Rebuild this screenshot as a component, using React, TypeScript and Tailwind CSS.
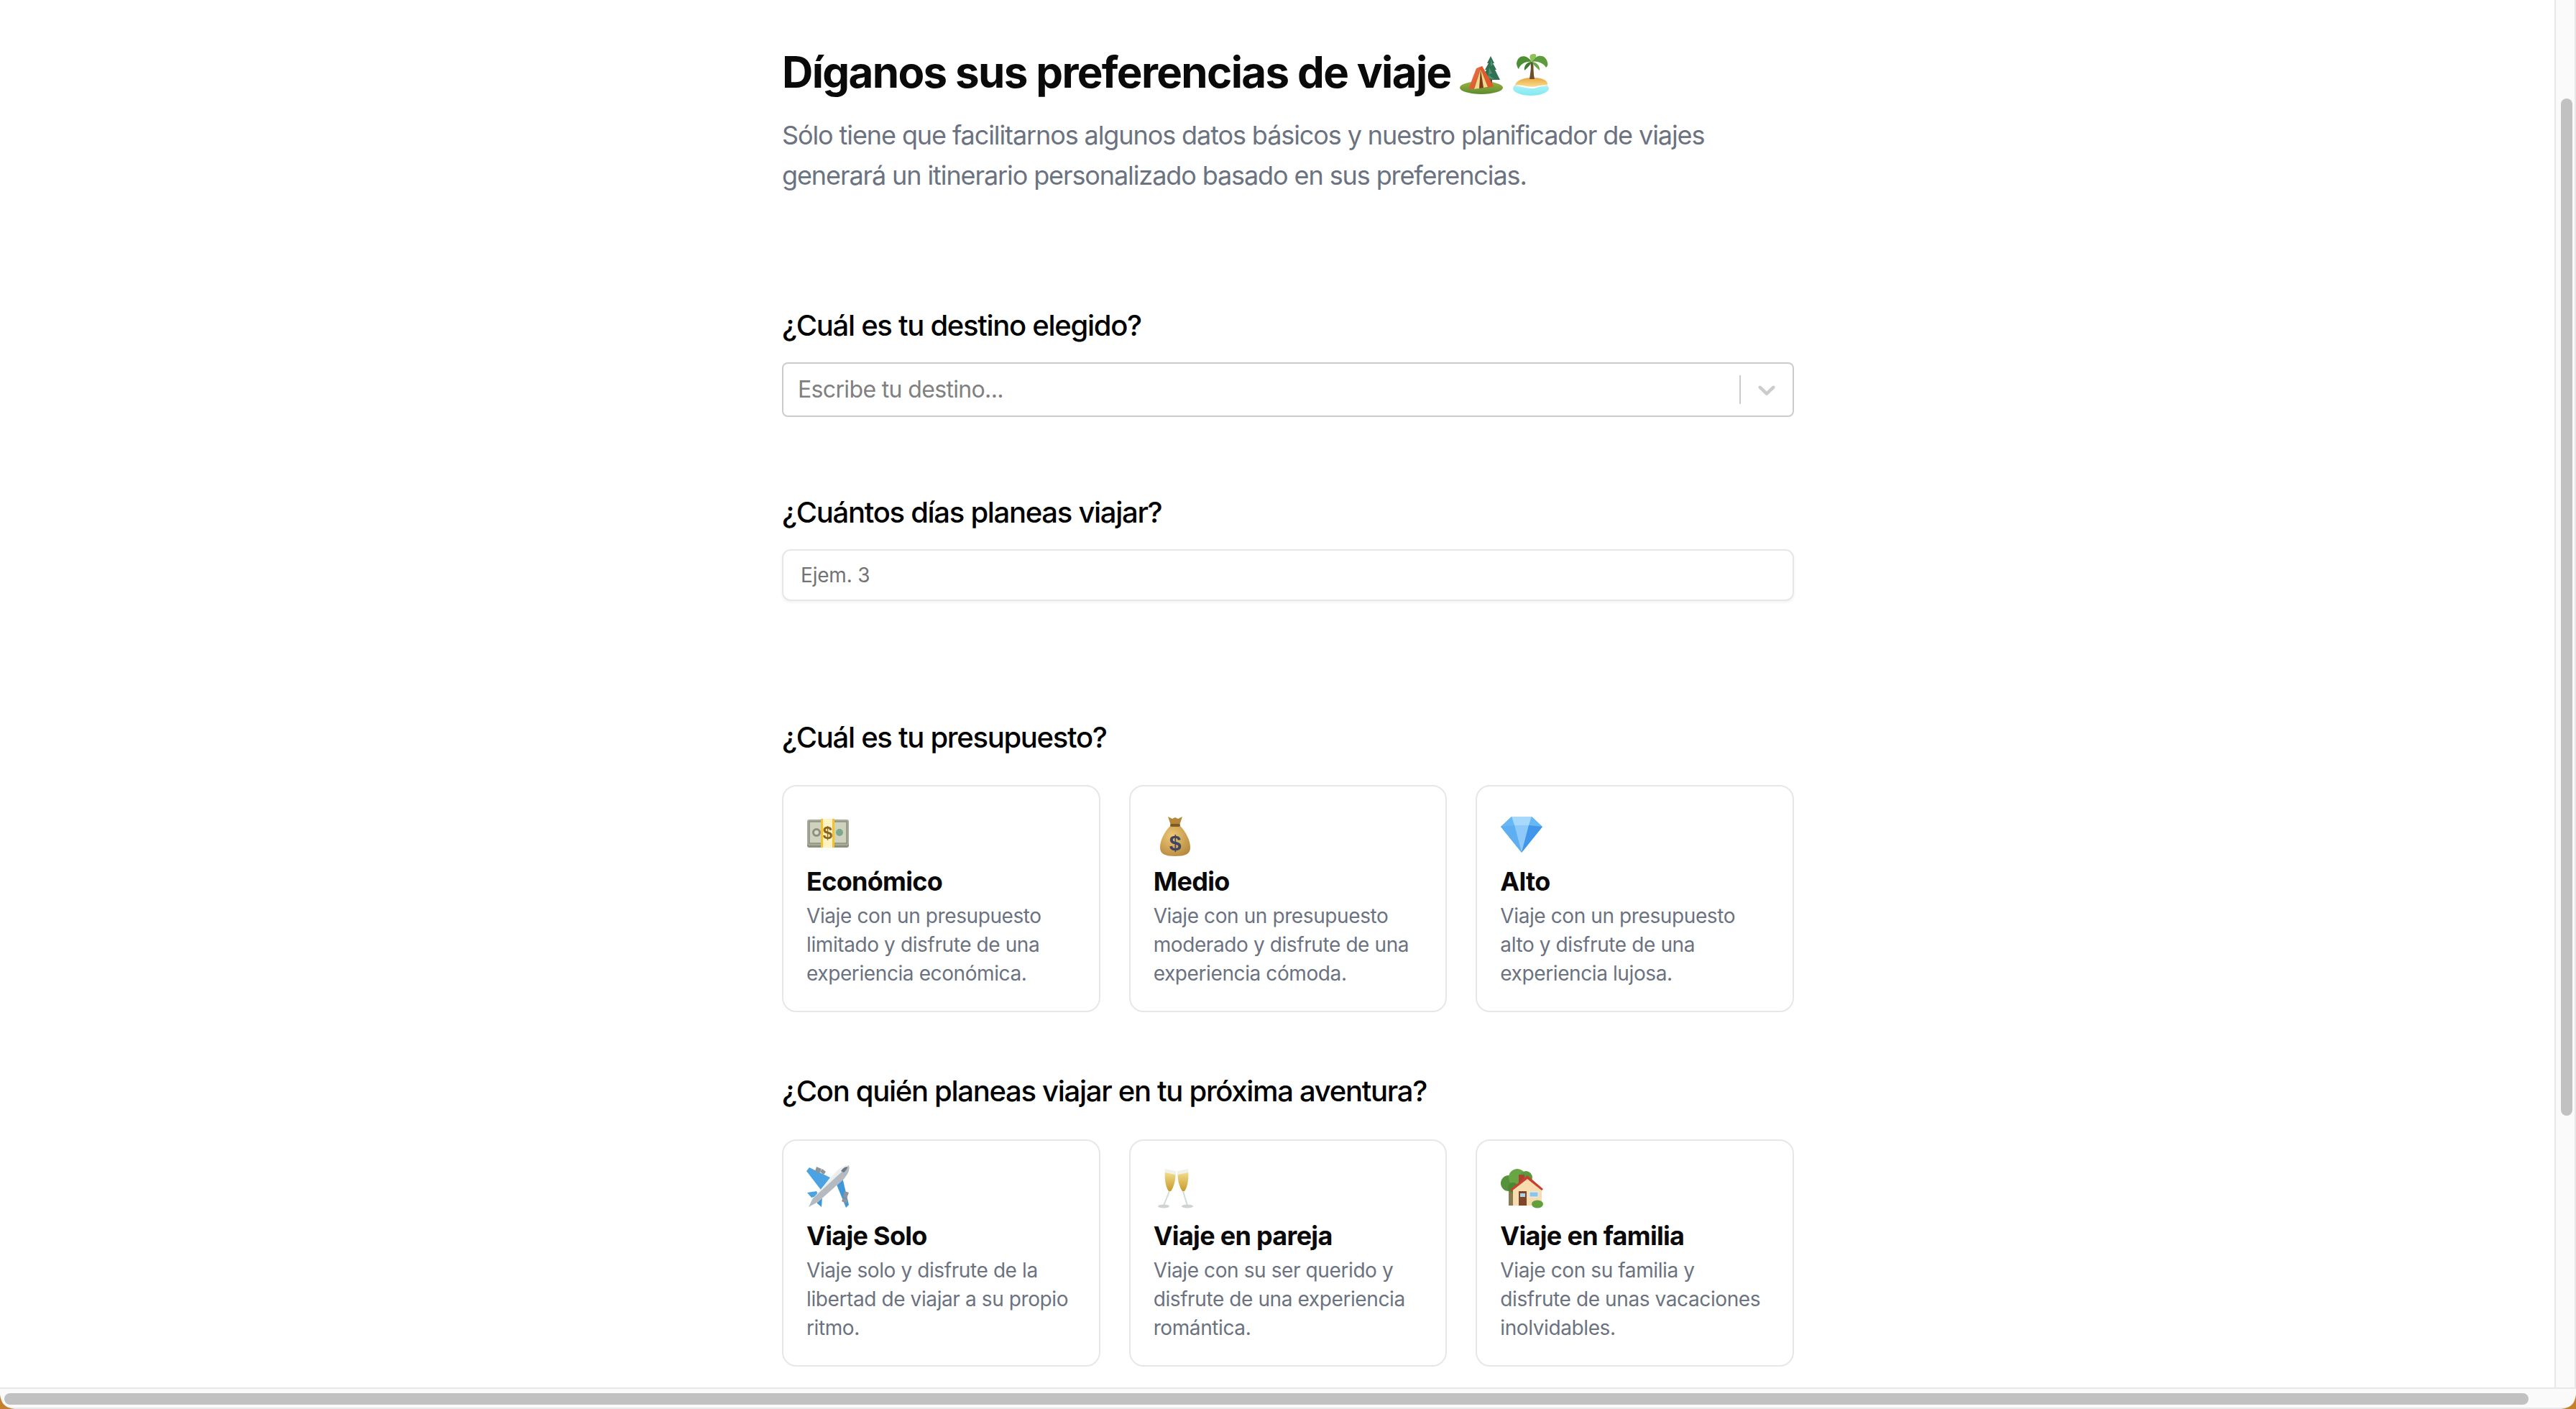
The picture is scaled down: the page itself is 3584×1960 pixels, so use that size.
import React from "react";

const Tent = () => (
  <svg viewBox="0 0 60 56" className="inline-block w-[60px] h-[56px] align-[-12px]">
    <defs>
      <linearGradient id="tg" x1="0" y1="0" x2="0" y2="1"><stop offset="0" stopColor="#9ab544" /><stop offset="1" stopColor="#5d8a2b" /></linearGradient>
      <linearGradient id="tr" x1="0" y1="0" x2="1" y2="1"><stop offset="0" stopColor="#f0764a" /><stop offset="1" stopColor="#cf4a22" /></linearGradient>
    </defs>
    <ellipse cx="30" cy="44" rx="30" ry="9" fill="url(#tg)" />
    <rect x="42" y="30" width="3" height="10" fill="#6b4a2c" />
    <path d="M43 0 L48 10 L46 10 L51 19 L49 19 L56 33 L30 33 L37 19 L35 19 L40 10 L38 10 Z" fill="#2f7150" />
    <path d="M43 4 L46 12 L43 14 Z M41 16 L45 24 L40 26 Z M40 26 L48 32 L38 31 Z" fill="#4d9470" />
    <path d="M12 46 L23 17 L31 14 L47 42 Z" fill="url(#tr)" />
    <path d="M31 14 L47 42 L38 44 L27 17 Z" fill="#e2592c" />
    <path d="M29 18 L20 46 L39 43 Z" fill="#7a3a20" />
    <path d="M29 18 L20 46 L27 45 Z M29 18 L39 43 L33 44 Z" fill="#f1d98a" />
  </svg>
);

const Island = () => (
  <svg viewBox="0 0 52 60" className="inline-block w-[52px] h-[60px] align-[-12px]">
    <defs>
      <linearGradient id="is" x1="0" y1="0" x2="0" y2="1"><stop offset="0" stopColor="#e8a83f" /><stop offset="1" stopColor="#fbdf95" /></linearGradient>
      <linearGradient id="iw" x1="0" y1="0" x2="0" y2="1"><stop offset="0" stopColor="#bff3f6" /><stop offset="1" stopColor="#7feaf2" /></linearGradient>
    </defs>
    <ellipse cx="26" cy="49" rx="25" ry="10" fill="url(#iw)" />
    <path d="M4 45 C5 37 18 34 28 34 C40 34 50 37 49 44 C46 46 40 44 34 47 C26 50 12 44 4 45 Z" fill="url(#is)" />
    <path d="M4 45 C14 43 24 49 34 46 C40 44 45 45 49 44 C46 47 40 45 34 48 C26 51 12 46 4 45 Z" fill="#ffffff" />
    <path d="M25 12 C27 20 25 28 24 36 L31 36 C29 28 30 20 29 12 Z" fill="#6e4c2c" />
    <path d="M27 12 C20 1 8 2 6 14 C6 18 8 21 9 22 C11 15 19 11 27 12 Z" fill="#4f8f34" />
    <path d="M27 12 C34 0 47 2 49 13 C50 16 49 18 47 20 C44 14 35 10 27 12 Z" fill="#5c9c3c" />
    <path d="M27 12 C22 4 25 1 30 1 C36 1 33 7 27 12 Z" fill="#8fc05a" />
    <path d="M27 12 C20 12 16 18 17 24 C21 20 25 17 27 12 Z" fill="#3d7a2e" />
    <path d="M27 12 C33 12 39 17 38 24 C34 20 30 17 27 12 Z" fill="#6aa844" />
  </svg>
);

const Money = () => (
  <svg viewBox="0 0 60 60" className="w-[60px] h-[60px]">
    <rect x="1" y="8" width="58" height="37" rx="3" fill="#8b8f7e" />
    <rect x="1" y="6" width="58" height="36" rx="3" fill="#a9ad98" />
    <rect x="4" y="9" width="52" height="30" fill="#cfd2bf" />
    <rect x="4" y="9" width="52" height="30" fill="none" stroke="#8d907f" strokeWidth="1.5" />
    <circle cx="14" cy="24" r="6" fill="#8d907f" />
    <circle cx="14" cy="24" r="3" fill="#d8dbc8" />
    <circle cx="46" cy="24" r="5" fill="#7da88c" />
    <rect x="20" y="5" width="19" height="40" fill="#fff3c4" />
    <rect x="20" y="5" width="3" height="40" fill="#f4c22f" />
    <rect x="36" y="5" width="3" height="40" fill="#f4c22f" />
    <text x="29.5" y="33" textAnchor="middle" fontSize="24" fontWeight="700" fill="#8a6414" fontFamily="Liberation Sans, sans-serif">$</text>
  </svg>
);

const Bag = () => (
  <svg viewBox="0 0 60 60" className="w-[60px] h-[60px]">
    <defs>
      <radialGradient id="bg" cx="0.4" cy="0.35" r="0.8"><stop offset="0" stopColor="#efc878" /><stop offset="1" stopColor="#b28336" /></radialGradient>
    </defs>
    <path d="M20 2 L26 5 L30 3 L34 5 L40 2 L36 14 L24 14 Z" fill="#b5873a" />
    <path d="M24 14 C14 24 9 36 9 45 C9 54 16 57 30 57 C44 57 51 54 51 45 C51 36 46 24 36 14 Z" fill="url(#bg)" />
    <rect x="23" y="12" width="14" height="4" rx="2" fill="#7f5a22" />
    <text x="30" y="49" textAnchor="middle" fontSize="30" fontWeight="700" fill="#3f4560" fontFamily="Liberation Sans, sans-serif">$</text>
  </svg>
);

const Gem = () => (
  <svg viewBox="0 0 60 60" className="w-[60px] h-[60px]">
    <path d="M16 2 L44 2 L59 16 L30 52 L1 16 Z" fill="#6bb8f6" />
    <path d="M16 2 L44 2 L40 14 L20 14 Z" fill="#a6d9fb" />
    <path d="M1 16 L16 2 L20 14 Z M59 16 L44 2 L40 14 Z" fill="#69b6f4" />
    <path d="M20 14 L40 14 L30 52 Z" fill="#8ec9fa" />
    <path d="M1 16 L20 14 L30 52 Z" fill="#5eaef2" />
    <path d="M59 16 L40 14 L30 52 Z" fill="#3f96ea" />
  </svg>
);

const Plane = () => (
  <svg viewBox="0 0 60 60" className="w-[60px] h-[60px] mt-[-6px]">
    <path d="M33 17 L4 3 L0 8 L20 34 Z" fill="#4ba3e3" />
    <path d="M42 27 L55 59 L59 55 L50 17 Z" fill="#3f97da" />
    <path d="M14 36 L1 38 L7 45 L17 42 Z" fill="#4ba3e3" />
    <path d="M22 44 L21 58 L15 53 L15 45 Z" fill="#3f97da" />
    <path d="M14 2 L21 5 L18 11 L12 8 Z M22 5 L27 9 L24 13 L19 9 Z" fill="#8f9499" />
    <path d="M53 36 L59 38 L56 46 L51 44 Z M51 45 L58 48 L55 53 L49 50 Z" fill="#8f9499" />
    <path d="M59 0 C54 -1 47 3 41 9 L9 46 L3 58 L16 51 L52 19 C57 13 61 6 59 0 Z" fill="#eceef0" />
    <path d="M59 0 L9 46 L3 58 L16 51 L52 19 C57 13 61 6 59 0 Z" fill="#b4babf" />
    <path d="M57 2 C53 2 50 5 48 8 L52 10 C55 7 57 5 57 2 Z" fill="#6a7a86" />
  </svg>
);

const Flutes = () => (
  <svg viewBox="0 0 60 60" className="w-[60px] h-[60px] mt-[-3px]">
    <defs>
      <linearGradient id="ch" x1="0" y1="0" x2="0" y2="1"><stop offset="0" stopColor="#f3dc8a" /><stop offset="1" stopColor="#c79a2a" /></linearGradient>
    </defs>
    <path d="M16 2 L31 5 C32 15 28 28 24 33 L21 33 C16 28 14 14 16 2 Z" fill="#f1f1ea" />
    <path d="M16 7 L30 10 C31 16 28 28 24 33 L21 33 C17 28 15 15 16 7 Z" fill="url(#ch)" />
    <line x1="22" y1="33" x2="14" y2="53" stroke="#d5d8d8" strokeWidth="2" />
    <ellipse cx="14" cy="54" rx="8" ry="2.5" fill="#cfd3d3" />
    <path d="M48 2 L33 5 C32 15 36 28 40 33 L43 33 C48 28 50 14 48 2 Z" fill="#f1f1ea" />
    <path d="M48 7 L34 10 C33 16 36 28 40 33 L43 33 C47 28 49 15 48 7 Z" fill="url(#ch)" />
    <line x1="41" y1="33" x2="47" y2="53" stroke="#d5d8d8" strokeWidth="2" />
    <ellipse cx="47" cy="54" rx="8" ry="2.5" fill="#cfd3d3" />
  </svg>
);

const House = () => (
  <svg viewBox="0 0 60 60" className="w-[60px] h-[60px] mt-[-3px]">
    <rect x="12" y="28" width="7" height="25" fill="#8a7a50" />
    <circle cx="12" cy="22" r="11" fill="#57923a" />
    <circle cx="24" cy="14" r="12" fill="#68a545" />
    <circle cx="36" cy="14" r="9" fill="#5a9a3c" />
    <circle cx="18" cy="28" r="7" fill="#4c8632" />
    <rect x="26" y="10" width="8" height="12" fill="#a9432f" />
    <path d="M18 28 L38 13 L58 28 L58 53 L18 53 Z" fill="#f6dcae" />
    <path d="M14 31 L38 11 L60 30 L58 32 L38 16 L16 33 Z" fill="#c8402f" />
    <rect x="26" y="33" width="11" height="20" fill="#7e4526" />
    <rect x="28" y="36" width="7" height="5" fill="#a9d3ee" />
    <rect x="41" y="34" width="12" height="7" fill="#8cc4ea" stroke="#e9eef2" />
    <ellipse cx="52" cy="51" rx="8" ry="5.5" fill="#62a03e" />
  </svg>
);

const Chevron = () => (
  <svg viewBox="0 0 20 20" className="w-10 h-10 fill-[#cccccc]">
    <path d="M4.516 7.548c0.436-0.446 1.043-0.481 1.576 0l3.908 3.747 3.908-3.747c0.533-0.481 1.141-0.446 1.574 0 0.436 0.445 0.408 1.197 0 1.615-0.406 0.418-4.695 4.502-4.695 4.502-0.217 0.223-0.502 0.335-0.787 0.335s-0.57-0.112-0.789-0.335c0 0-4.287-4.084-4.695-4.502s-0.436-1.17 0-1.615z" />
  </svg>
);

type CardData = { icon: React.ReactNode; title: string; desc: string };

const budget: CardData[] = [
  { icon: <Money />, title: "Económico", desc: "Viaje con un presupuesto limitado y disfrute de una experiencia económica." },
  { icon: <Bag />, title: "Medio", desc: "Viaje con un presupuesto moderado y disfrute de una experiencia cómoda." },
  { icon: <Gem />, title: "Alto", desc: "Viaje con un presupuesto alto y disfrute de una experiencia lujosa." },
];

const company: CardData[] = [
  { icon: <Plane />, title: "Viaje Solo", desc: "Viaje solo y disfrute de la libertad de viajar a su propio ritmo." },
  { icon: <Flutes />, title: "Viaje en pareja", desc: "Viaje con su ser querido y disfrute de una experiencia romántica." },
  { icon: <House />, title: "Viaje en familia", desc: "Viaje con su familia y disfrute de unas vacaciones inolvidables." },
];

const Card = ({ icon, title, desc }: CardData) => (
  <div className="rounded-[20px] border-2 border-[#e5e7eb] bg-white p-8">
    <div className="h-[72px] pt-2">{icon}</div>
    <h3 className="text-[36px] leading-[56px] font-bold tracking-[-0.7px] text-[#0a0a0a]">{title}</h3>
    <p className="text-[28px] leading-[40px] tracking-[-0.4px] text-[#6b7280]">{desc}</p>
  </div>
);

const Heading = ({ children }: { children: React.ReactNode }) => (
  <h2 className="pt-[1px] text-[40px] leading-[56px] font-medium tracking-[-1.3px] text-black">{children}</h2>
);

export default function App() {
  return (
    <div className="relative w-[3584px] h-[1960px] overflow-hidden bg-white flex flex-col font-['Inter',sans-serif]">
      <div className="flex flex-1 min-h-0">
        <main className="flex-1 min-w-0 pl-[1088px] pt-[64px]">
          <div className="w-[1408px]">
            <h1 className="text-[60px] leading-[72px] font-bold tracking-[-1.65px] text-[#0a0a0a]">
              Díganos sus preferencias de viaje <Tent /> <Island />
            </h1>
            <p className="mt-6 text-[36px] leading-[56px] tracking-[-1.1px] text-[#6b7280]">
              Sólo tiene que facilitarnos algunos datos básicos y nuestro planificador de viajes generará un itinerario personalizado basado en sus preferencias.
            </p>

            <div className="mt-[152px]">
              <Heading>¿Cuál es tu destino elegido?</Heading>
              <div className="mt-[23px] h-[76px] rounded-lg border-2 border-[#cccccc] bg-white flex items-center">
                <span className="flex-1 pl-[20px] text-[32px] tracking-[-0.65px] text-[#808080]">Escribe tu destino...</span>
                <span className="w-[2px] h-[40px] bg-[#cccccc]" />
                <span className="w-[72px] flex justify-center"><Chevron /></span>
              </div>
            </div>

            <div className="mt-[104px]">
              <Heading>¿Cuántos días planeas viajar?</Heading>
              <div className="mt-[23px] h-[72px] rounded-xl border-2 border-[#e5e7eb] bg-white px-6 flex items-center shadow-[0_2px_4px_rgba(0,0,0,0.06)]">
                <span className="text-[28px] tracking-[-0.2px] text-[#737373]">Ejem. 3</span>
              </div>
            </div>

            <div className="mt-[161px]">
              <Heading>¿Cuál es tu presupuesto?</Heading>
              <div className="mt-[38px] grid grid-cols-3 gap-10">
                {budget.map((c) => <Card key={c.title} {...c} />)}
              </div>
            </div>

            <div className="mt-[81px]">
              <Heading>¿Con quién planeas viajar en tu próxima aventura?</Heading>
              <div className="mt-[39px] grid grid-cols-3 gap-10">
                {company.map((c) => <Card key={c.title} {...c} />)}
              </div>
            </div>
          </div>
        </main>
        <aside className="w-[30px] shrink-0 border-l-2 border-r-2 border-[#e8e8e8] bg-[#fafafa] flex flex-col items-center pl-[4px] pt-[137px]">
          <div className="w-4 h-[1415px] rounded-full bg-[#c1c1c1]" />
        </aside>
      </div>
      <footer className="h-[30px] shrink-0 border-t-2 border-b-2 border-[#e8e8e8] bg-[#fafafa] pl-[6px] pt-[6px]">
        <div className="w-[3512px] h-4 rounded-full bg-[#c1c1c1]" />
      </footer>
      <div className="absolute left-0 bottom-0 w-[20px] h-[20px] bg-[#c67f2a] [clip-path:path('M0_0_C2_14_8_18_20_20_L0_20_Z')]" />
      <div className="absolute right-0 bottom-0 w-[20px] h-[20px] bg-[#c67f2a] [clip-path:path('M20_0_C18_14_12_18_0_20_L20_20_Z')]" />
    </div>
  );
}
